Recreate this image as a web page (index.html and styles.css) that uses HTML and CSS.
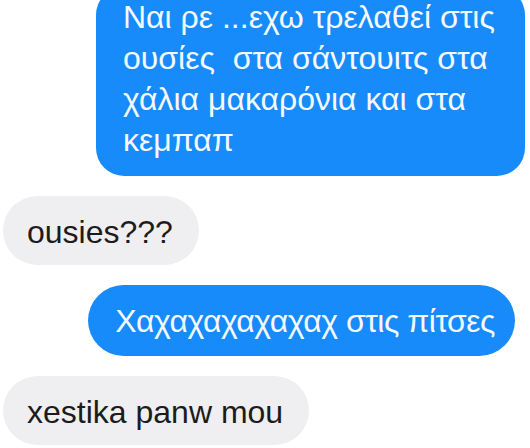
FILE: index.html
```html
<!DOCTYPE html>
<html lang="el">
<head>
<meta charset="UTF-8">
<meta name="viewport" content="width=device-width, initial-scale=1.0">
<title>Μηνύματα</title>
<link rel="stylesheet" href="styles.css">
</head>
<body>

<div class="chat">
    <!-- πρώτο μήνυμα, κομμένο από πάνω -->
    <div class="msg out first">Ναι ρε ...εχω τρελαθεί στις ουσίες&nbsp; στα σάντουιτς στα χάλια μακαρόνια και στα κεμπαπ</div>
    <div class="msg in">ousies???</div>
    <div class="msg out short">Χαχαχαχαχαχαχ στις πίτσες</div>
    <div class="msg in">xestika panw mou</div>
</div>

</body>
</html>
```

FILE: styles.css
```css
/* βασικά */
body {
    margin: 0;
    padding: 0;
    background-color: #fff;
    font-family: "Liberation Sans", Arial, sans-serif;
    overflow: hidden;
}

.chat {
    display: flex;
    flex-direction: column;
    gap: 20px;
    padding-left: 3px;
}

.msg {
    font-size: 32px;
    line-height: 35px;
    box-sizing: border-box;
}

/* εξερχόμενα (μπλε) */
.msg.out {
    align-self: flex-end;
    background-color: #178bf9;
    color: #f4f9ff;
}
.msg.first {
    margin-top: -13px;
    margin-right: 5px;
    width: 429px;
    padding: 10px 20px 15px 27px;
    line-height: 41px;
    border-radius: 28px;
}
.msg.short {
    margin-right: 15px;
    padding: 19px 20px 17px 27px;
    letter-spacing: -0.5px;
    border-radius: 36px;
}

/* εισερχόμενα (γκρι) */
.msg.in {
    align-self: flex-start;
    background-color: #efeef0;
    color: #1c1c1c;
    padding: 19px 26px 15px 24px;
    border-radius: 35px;
}
```
